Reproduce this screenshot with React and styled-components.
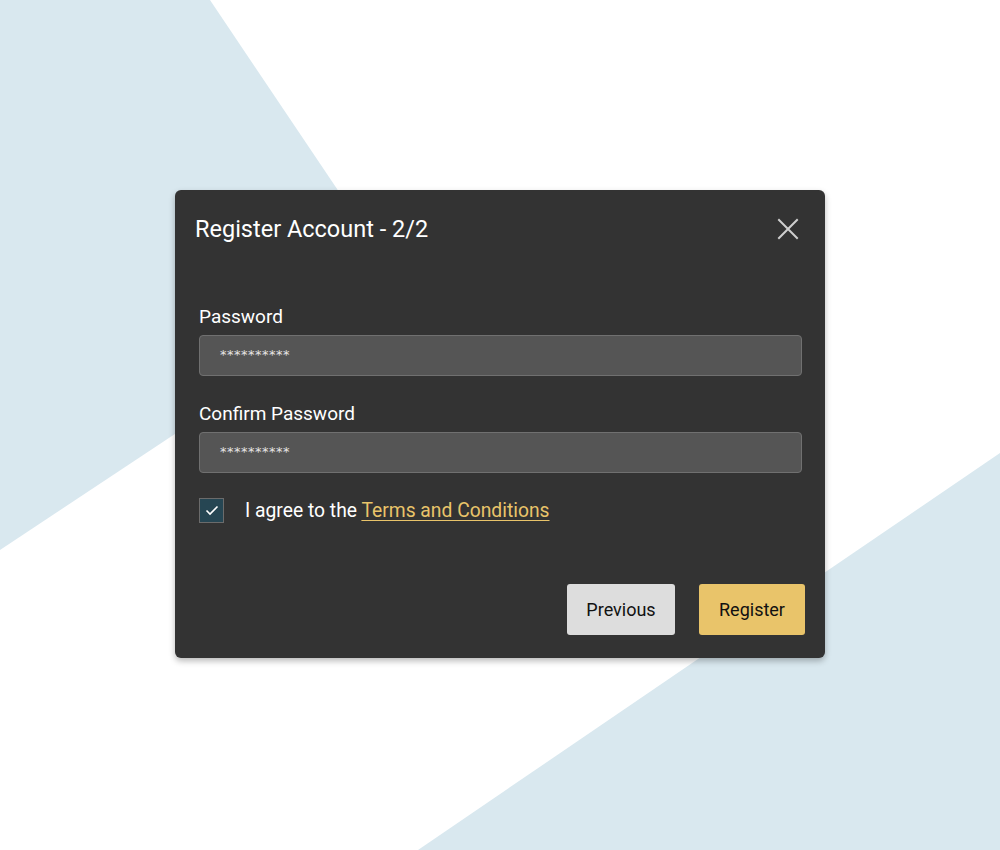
import React from "react";
import styled, { createGlobalStyle } from "styled-components";

const Global = createGlobalStyle`
  html, body { margin: 0; padding: 0; background: #ffffff; }
  body { font-family: Roboto, "Noto Sans", Arial, sans-serif; }
  * { box-sizing: border-box; }
`;

const Page = styled.div`
  position: relative;
  width: 1000px;
  height: 850px;
  overflow: hidden;
  background: #ffffff;
  display: flex;
  flex-direction: column;
  align-items: center;
  padding-top: 190px;
`;

const Backdrop = styled.svg`
  position: absolute;
  inset: 0;
  width: 1000px;
  height: 850px;
  z-index: 0;
`;

const Dialog = styled.div`
  position: relative;
  z-index: 1;
  width: 650px;
  height: 468px;
  background: #333333;
  border-radius: 6px;
  box-shadow: 0 3px 6px rgba(0, 0, 0, 0.28);
  display: flex;
  flex-direction: column;
  color: #ffffff;
`;

const Header = styled.div`
  display: flex;
  justify-content: space-between;
  align-items: flex-start;
  padding: 24px 24px 0 20px;
  height: 78px;
`;

const Title = styled.h1`
  margin: 0;
  font-size: 23.5px;
  font-weight: 400;
  line-height: 30px;
  color: #ffffff;
`;

const CloseButton = styled.button`
  background: none;
  border: none;
  padding: 0;
  margin-top: 2px;
  width: 26px;
  height: 26px;
  display: flex;
  align-items: center;
  justify-content: center;
  cursor: pointer;
`;

const Body = styled.div`
  display: flex;
  flex-direction: column;
  padding: 37px 23px 0 24px;
`;

const Field = styled.div`
  display: flex;
  flex-direction: column;
  margin-bottom: ${(p) => p.$gap}px;
`;

const Label = styled.label`
  font-size: 19px;
  line-height: 24px;
  color: #ffffff;
  margin-bottom: 6px;
`;

const Input = styled.div`
  height: 41px;
  background: #555555;
  border: 1px solid #707070;
  border-radius: 4px;
  display: flex;
  align-items: center;
  padding-left: 20px;
  padding-bottom: 3px;
  font-size: 13px;
  letter-spacing: 0.5px;
  color: #e6e6e6;
  font-family: "DejaVu Sans", sans-serif;
`;

const CheckRow = styled.div`
  display: flex;
  align-items: center;
  gap: 21px;
  margin-top: 25px;
`;

const Box = styled.div`
  width: 25px;
  height: 25px;
  background: #264653;
  border: 1px solid #6b6b6b;
  display: flex;
  align-items: center;
  justify-content: center;
`;

const CheckText = styled.span`
  font-size: 19.3px;
  line-height: 24px;
  color: #ffffff;
`;

const Link = styled.a`
  color: #e9c46a;
  text-decoration: underline;
  text-underline-offset: 3px;
`;

const Footer = styled.div`
  margin-top: auto;
  display: flex;
  justify-content: flex-end;
  gap: 24px;
  padding: 0 20px 23px 0;
`;

const Button = styled.button`
  height: 51px;
  width: ${(p) => p.$w}px;
  border: none;
  border-radius: 3px;
  background: ${(p) => p.$bg};
  color: #111111;
  font-family: Roboto, sans-serif;
  font-size: 18px;
  cursor: pointer;
`;

export default function App() {
  return (
    <>
      <Global />
      <Page>
        <Backdrop viewBox="0 0 1000 850" aria-hidden="true">
          <polygon points="0,0 210,0 401,284 0,550" fill="#d9e8ef" />
          <polygon points="1000,453 1000,850 418,850" fill="#d9e8ef" />
        </Backdrop>
        <Dialog>
          <Header>
            <Title>Register Account - 2/2</Title>
            <CloseButton aria-label="Close">
              <svg width="22" height="22" viewBox="0 0 22 22">
                <path d="M2 2 L20 20 M20 2 L2 20" stroke="#cfcfcf" strokeWidth="2" strokeLinecap="square" />
              </svg>
            </CloseButton>
          </Header>
          <Body>
            <Field $gap={26}>
              <Label>Password</Label>
              <Input>**********</Input>
            </Field>
            <Field $gap={0}>
              <Label>Confirm Password</Label>
              <Input>**********</Input>
            </Field>
            <CheckRow>
              <Box>
                <svg width="14" height="11" viewBox="0 0 14 11">
                  <path d="M1.5 5.5 L5 9 L12.5 1.5" stroke="#ffffff" strokeWidth="1.6" fill="none" />
                </svg>
              </Box>
              <CheckText>
                I agree to the <Link>Terms and Conditions</Link>
              </CheckText>
            </CheckRow>
          </Body>
          <Footer>
            <Button $w={108} $bg="#dddddd">Previous</Button>
            <Button $w={106} $bg="#e9c46a">Register</Button>
          </Footer>
        </Dialog>
      </Page>
    </>
  );
}
